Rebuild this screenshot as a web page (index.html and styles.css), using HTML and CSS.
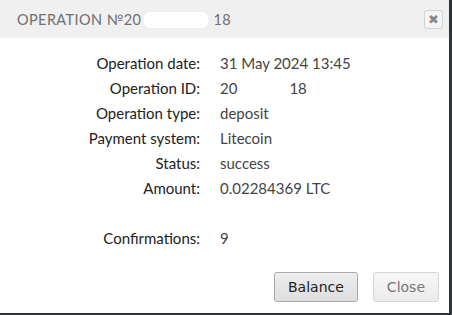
FILE: index.html
```html
<!DOCTYPE html>
<html lang="en">

<head>
    <meta charset="UTF-8">
    <meta name="viewport" content="width=device-width, initial-scale=1.0">
    <title>Operation</title>
    <link rel="stylesheet" href="styles.css">
</head>

<body>
    <div class="dialog">
        <div class="dialog-head">
            <span class="dialog-title">OPERATION №20<span class="blur"></span>18</span>
            <button class="head-close" title="Close">✖</button>
        </div>
        <div class="dialog-body">
            <div class="info">
                <span class="label">Operation date:</span>
                <span class="value">31 May 2024 13:45</span>
                <span class="label">Operation ID:</span>
                <span class="value">20<span class="gap"></span>18</span>
                <span class="label">Operation type:</span>
                <span class="value">deposit</span>
                <span class="label">Payment system:</span>
                <span class="value">Litecoin</span>
                <span class="label">Status:</span>
                <span class="value">success</span>
                <span class="label">Amount:</span>
                <span class="value">0.02284369 LTC</span>
                <span class="label"></span>
                <span class="value"></span>
                <span class="label">Confirmations:</span>
                <span class="value">9</span>
            </div>
        </div>
        <div class="dialog-foot">
            <button class="btn">Balance</button>
            <button class="btn btn-light">Close</button>
        </div>
    </div>
</body>

</html>
```

FILE: styles.css
```css
* {
    padding: 0;
    margin: 0;
    box-sizing: border-box;
}

body {
    background-color: #2f3438;
    font-family: Lato, "Open Sans", sans-serif;
}

.dialog {
    width: 449px;
    height: 313px;
    background-color: #fff;
    display: flex;
    flex-direction: column;
}

.dialog-head {
    height: 38px;
    background-color: #f0f0f0;
    display: flex;
    align-items: center;
    justify-content: space-between;
    padding: 0 6px 0 17px;
}

.dialog-title {
    font-size: 14.5px;
    letter-spacing: 0.4px;
    color: #6f6f6f;
    display: flex;
    align-items: center;
}

.blur {
    display: inline-block;
    width: 64px;
    height: 16px;
    background-color: #fff;
    border-radius: 6px;
    margin: 2px 5px 0 3px;
}

.head-close {
    width: 19px;
    height: 19px;
    border: 1px solid #d4d4d4;
    border-radius: 3px;
    background-color: #f4f4f4;
    color: #888;
    font-size: 13px;
    line-height: 17px;
    font-family: "DejaVu Sans", sans-serif;
}

.dialog-body {
    flex: 1;
    padding-top: 12px;
}

.info {
    display: grid;
    grid-template-columns: 200px auto;
    column-gap: 20px;
    grid-auto-rows: 25px;
    align-items: center;
    font-size: 15px;
}

.label {
    text-align: right;
    color: #222;
}

.value {
    color: #444;
}

.gap {
    display: inline-block;
    width: 52px;
}

.dialog-foot {
    display: flex;
    justify-content: flex-end;
    gap: 15px;
    padding: 0 10px 11px 0;
}

.btn {
    height: 30px;
    padding: 0 13px;
    font-family: "DejaVu Sans", sans-serif;
    font-size: 14px;
    color: #222;
    border: 1px solid #a9a9a9;
    border-radius: 3px;
    background: linear-gradient(#ededed, #dedede);
}

.btn-light {
    color: #777;
    border-color: #d6d6d6;
    background: linear-gradient(#f6f6f6, #ececec);
}
```
